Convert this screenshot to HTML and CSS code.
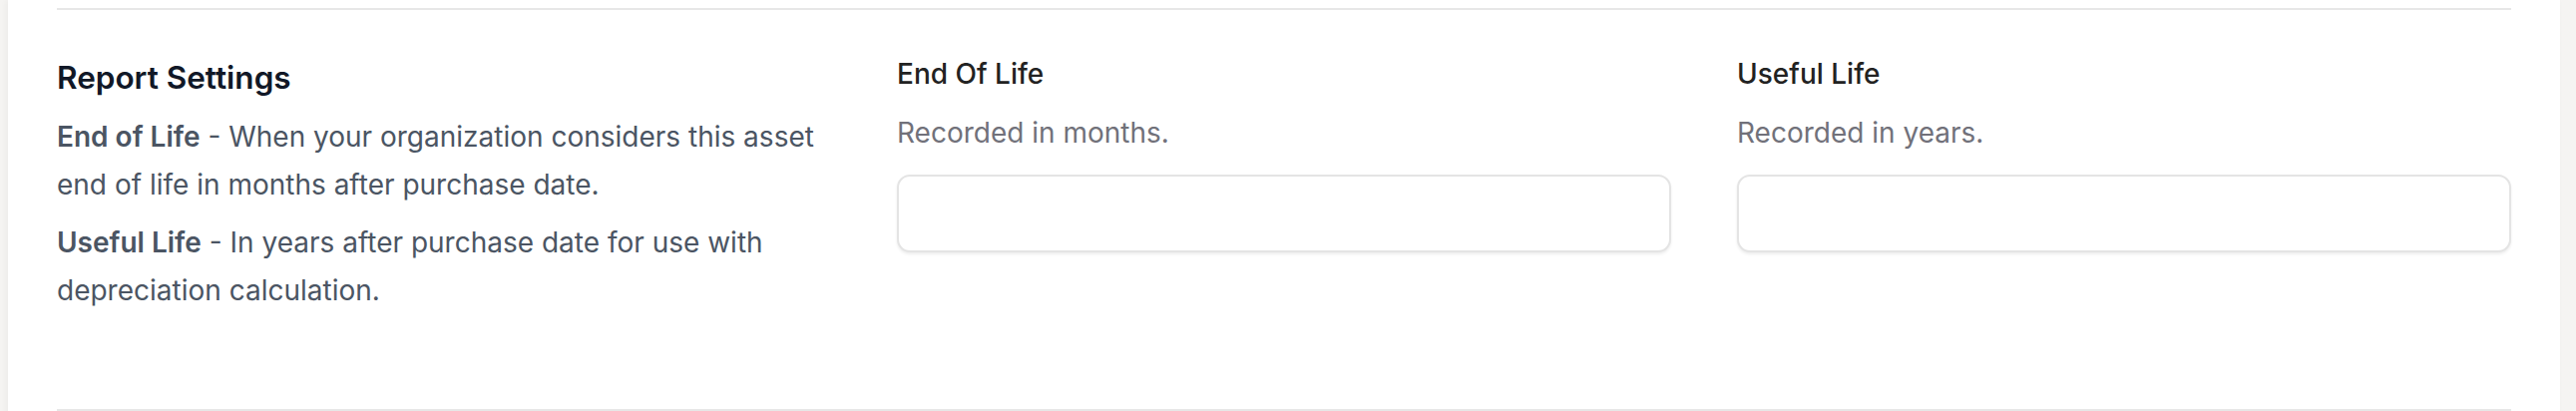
FILE: index.html
```html
<!DOCTYPE html>
<html lang="en">
<head>
    <meta charset="UTF-8" />
    <meta name="viewport" content="width=device-width, initial-scale=1" />
    <title>Report Settings</title>
    <link rel="stylesheet" href="styles.css">
</head>
<body>

    <div class="tarjeta">
        <section class="seccion">
            <div class="info">
                <h2>Report Settings</h2>
                <p><strong>End of Life</strong> - When your organization considers this asset end of life in months after purchase date.</p>
                <p><strong>Useful Life</strong> - In years after purchase date for use with depreciation calculation.</p>
            </div>

            <div class="campo">
                <label for="endOfLife">End Of Life</label>
                <span class="ayuda">Recorded in months.</span>
                <input type="number" id="endOfLife" />
            </div>

            <div class="campo">
                <label for="usefulLife">Useful Life</label>
                <span class="ayuda">Recorded in years.</span>
                <input type="number" id="usefulLife" />
            </div>
        </section>
        <section class="seccion siguiente"></section>
    </div>

</body>
</html>
```

FILE: styles.css
```css
body {
    font-family: Inter, 'Noto Sans', sans-serif;
    background-color: #f5f4f2;
    margin: 0;
    padding: 0 16px 0 8px;
    height: 412px;
    overflow: hidden;
}

.tarjeta {
    background-color: white;
    padding: 8px 49px 0;
    height: 100%;
    box-shadow: -2px 0 6px rgba(0,0,0,0.04);
}

.seccion {
    display: grid;
    grid-template-columns: repeat(3, 1fr);
    column-gap: 66px;
    border-top: 2px solid #e7e7e7;
    padding: 40px 0 95px;
}

.info h2 {
    font-size: 31.5px;
    line-height: 55px;
    font-weight: 600;
    color: #111827;
    margin: 0 0 8px;
}

.info p {
    font-size: 28px;
    line-height: 48px;
    color: #4b5563;
    margin: 0;
}

.info p + p {
    margin-top: 10px;
}

.info strong {
    font-weight: 600;
}

.campo label {
    display: block;
    font-size: 28px;
    line-height: 49px;
    font-weight: 500;
    color: #222222;
}

.ayuda {
    display: block;
    margin-top: 14px;
    font-size: 28px;
    line-height: 40px;
    color: #71717a;
}

.campo input {
    display: block;
    width: 100%;
    height: 78px;
    margin-top: 22px;
    box-sizing: border-box;
    border: 2px solid #e4e4e4;
    border-radius: 13px;
    box-shadow: 0 2px 3px rgba(0,0,0,0.07);
    background: white;
    font-size: 28px;
    padding: 0 20px;
}

.siguiente {
    padding: 0;
}
```
